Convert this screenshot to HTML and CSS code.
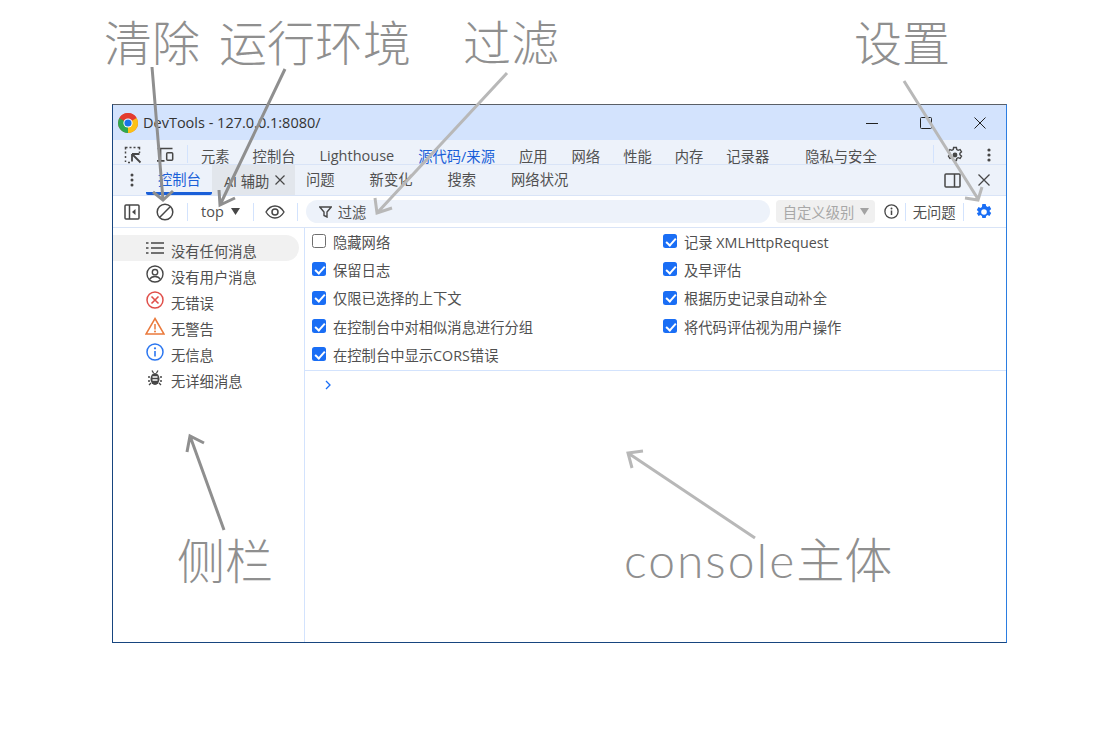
FILE: index.html
```html
<!DOCTYPE html>
<html lang="zh-CN">
<head>
<meta charset="utf-8">
<title>DevTools</title>
<link rel="stylesheet" href="styles.css">
</head>
<body>
<div class="window">
  <div class="titlebar">
    <svg class="chrome-logo" width="20" height="20" viewBox="0 0 20 20"><circle cx="10" cy="10" r="10" fill="#e33b2e"/><path d="M10 10 L18.66 5 A10 10 0 0 1 10 20 Z" fill="#fbc116"/><path d="M10 10 L10 20 A10 10 0 0 1 1.34 5 Z" fill="#2da94f"/><path d="M1.34 5 A10 10 0 0 1 18.66 5 L10 5 A5 5 0 0 0 5.67 7.5 Z" fill="#e33b2e"/><circle cx="10" cy="10" r="4.6" fill="#fff"/><circle cx="10" cy="10" r="3.6" fill="#1a73e8"/></svg>
    <span class="title-text">DevTools - 127.0.0.1:8080/</span>
    <div class="win-controls">
      <svg width="12" height="12" viewBox="0 0 12 12"><path d="M0 6.500H12" stroke="#222" fill="none"/></svg>
      <svg width="12" height="12" viewBox="0 0 12 12"><rect x=".5" y=".5" width="11" height="11" rx="1" stroke="#222" fill="none"/></svg>
      <svg width="12" height="12" viewBox="0 0 12 12"><path d="M.5 .5L11.500 11.500M11.500 .5L.5 11.500" stroke="#222" fill="none"/></svg>
    </div>
  </div>
  <div class="maintabs">
    <svg class="ico-inspect" width="18" height="18" viewBox="0 0 18 18"><path d="M1.500 16v-1.500M1.500 12v-2M1.500 7.500v-2M1.500 3.500V1.500H3.500M5.500 1.500h2M9.500 1.500h2M13.500 1.500h2v2M15.500 5.500v1.500M4 16.500h2" stroke="#474747" stroke-width="1.500" fill="none"/><path d="M8 8h7.500M8 8v7.500M8 8l8.500 8.500" stroke="#474747" stroke-width="1.800" fill="none"/></svg>
    <svg class="ico-device" width="20" height="18" viewBox="0 0 20 18"><path d="M5.500 3v11.500M2 14.800h7.500" stroke="#474747" stroke-width="1.700" fill="none"/><rect x="11.700" y="6.800" width="6" height="7.500" rx="1" stroke="#474747" stroke-width="1.500" fill="none"/><path d="M2.500 2.500h15" stroke="#474747" stroke-width="1.500"/></svg>
    <span class="vsep"></span>
    <span class="mt t1">元素</span>
    <span class="mt t2">控制台</span>
    <span class="mt t3">Lighthouse</span>
    <span class="mt t4 active">源代码/来源</span>
    <span class="mt t5">应用</span>
    <span class="mt t6">网络</span>
    <span class="mt t7">性能</span>
    <span class="mt t8">内存</span>
    <span class="mt t9">记录器</span>
    <span class="mt t10">隐私与安全</span>
    <span class="vsep end"></span>
    <svg class="ico-gear" width="18" height="18" viewBox="0 0 18 18"><path d="M7.600 1.500h2.800l.4 2.100 1.300.7 2-.8 1.400 2.400-1.600 1.400v1.400l1.600 1.400-1.400 2.400-2-.8-1.300.7-.4 2.100H7.600l-.4-2.100-1.300-.7-2 .8-1.400-2.400 1.600-1.400V7.300L2.500 5.900l1.400-2.400 2 .8 1.300-.7z" stroke="#474747" stroke-width="1.400" fill="none"/><circle cx="9" cy="9" r="2.400" fill="#474747"/></svg>
    <svg class="ico-dots" width="4" height="14" viewBox="0 0 4 14"><circle cx="2" cy="2" r="1.600" fill="#474747"/><circle cx="2" cy="7" r="1.600" fill="#474747"/><circle cx="2" cy="12" r="1.600" fill="#474747"/></svg>
  </div>
  <div class="drawertabs">
    <svg class="ico-dots2" width="4" height="14" viewBox="0 0 4 14"><circle cx="2" cy="2" r="1.500" fill="#474747"/><circle cx="2" cy="7" r="1.500" fill="#474747"/><circle cx="2" cy="12" r="1.500" fill="#474747"/></svg>
    <span class="dt dt-active">控制台</span>
    <span class="dt dt-ai">AI 辅助<svg width="10" height="10" viewBox="0 0 10 10"><path d="M.5 .5L9.500 9.500M9.500 .5L.5 9.500" stroke="#474747" stroke-width="1.200"/></svg></span>
    <span class="dt d3">问题</span>
    <span class="dt d4">新变化</span>
    <span class="dt d5">搜索</span>
    <span class="dt d6">网络状况</span>
    <svg class="ico-dock" width="17" height="15" viewBox="0 0 17 15"><rect x="1" y="1" width="15" height="13" rx="1" stroke="#474747" stroke-width="1.500" fill="none"/><path d="M10.500 1v13" stroke="#474747" stroke-width="1.500"/></svg>
    <svg class="ico-close" width="12" height="12" viewBox="0 0 12 12"><path d="M.5 .5L11.500 11.500M11.500 .5L.5 11.500" stroke="#474747" stroke-width="1.300"/></svg>
  </div>
  <div class="toolbar">
    <svg class="ico-side" width="16" height="16" viewBox="0 0 16 16"><rect x="1" y="1" width="14" height="14" rx="1" stroke="#474747" stroke-width="1.500" fill="none"/><path d="M5.500 1v14" stroke="#474747" stroke-width="1.500"/><path d="M11.500 5v6l-3.500-3z" fill="#474747"/></svg>
    <svg class="ico-clear" width="18" height="18" viewBox="0 0 18 18"><circle cx="9" cy="9" r="7.800" stroke="#474747" stroke-width="1.500" fill="none"/><path d="M3.800 14.200L14.200 3.800" stroke="#474747" stroke-width="1.500"/></svg>
    <span class="vsep s1"></span>
    <span class="ctx">top</span>
    <svg class="caret" width="9" height="7" viewBox="0 0 9 7"><path d="M0 0h9L4.500 7z" fill="#474747"/></svg>
    <span class="vsep s2"></span>
    <svg class="ico-eye" width="20" height="14" viewBox="0 0 20 14"><path d="M1 7C3.500 2.800 6.500 1 10 1s6.500 1.800 9 6c-2.500 4.200-5.500 6-9 6s-6.500-1.800-9-6z" stroke="#474747" stroke-width="1.400" fill="none"/><circle cx="10" cy="7" r="3" stroke="#474747" stroke-width="1.500" fill="none"/></svg>
    <span class="vsep s3"></span>
    <div class="filter">
      <svg width="13" height="12" viewBox="0 0 13 12"><path d="M.8 1h11.400L8 6v5L5 9.500V6z" stroke="#474747" stroke-width="1.400" fill="none"/></svg>
      <span>过滤</span>
    </div>
    <div class="level">自定义级别<svg width="9" height="7" viewBox="0 0 9 7"><path d="M0 0h9L4.500 7z" fill="#a3a3a3"/></svg></div>
    <svg class="ico-info" width="15" height="15" viewBox="0 0 15 15"><circle cx="7.500" cy="7.500" r="6.600" stroke="#474747" stroke-width="1.300" fill="none"/><path d="M7.500 6.500v4.500" stroke="#474747" stroke-width="1.500"/><circle cx="7.500" cy="4.400" r="1" fill="#474747"/></svg>
    <span class="vsep s4"></span>
    <span class="noissue">无问题</span>
    <span class="vsep s5"></span>
    <svg class="ico-gear-b" width="18" height="18" viewBox="0 0 18 18"><path d="M7.300 1h3.400l.4 2.100 1.400.8 2-.8 1.700 2.900-1.600 1.400v1.200l1.600 1.400-1.700 2.900-2-.8-1.400.8-.4 2.100H7.300l-.4-2.100-1.400-.8-2 .8-1.700-2.900L3.400 9.600V8.400L1.800 7l1.700-2.900 2 .8 1.400-.8z" fill="#1a6ef5"/><circle cx="9" cy="9" r="2.800" fill="#fff"/></svg>
  </div>
  <div class="body">
    <aside class="sidebar">
      <div class="sitem sel"><svg width="18" height="14" viewBox="0 0 18 14"><path d="M0 2h2.500M0 7h2.500M0 12h2.500M5 2h13M5 7h13M5 12h13" stroke="#474747" stroke-width="1.500"/></svg><span>没有任何消息</span></div>
      <div class="sitem"><svg width="18" height="18" viewBox="0 0 18 18"><circle cx="9" cy="9" r="8" stroke="#474747" stroke-width="1.400" fill="none"/><circle cx="9" cy="7.200" r="2.700" stroke="#474747" stroke-width="1.400" fill="none"/><path d="M3.500 14.500C5 11.900 7 11.500 9 11.500s4 .4 5.500 3" stroke="#474747" stroke-width="1.400" fill="none"/></svg><span>没有用户消息</span></div>
      <div class="sitem"><svg width="18" height="18" viewBox="0 0 18 18"><circle cx="9" cy="9" r="8" stroke="#e04f4a" stroke-width="1.500" fill="none"/><path d="M5.500 5.500l7 7M12.500 5.500l-7 7" stroke="#e04f4a" stroke-width="1.600"/></svg><span>无错误</span></div>
      <div class="sitem"><svg width="20" height="18" viewBox="0 0 20 18"><path d="M10 1.500L19 17H1z" stroke="#ea7a3c" stroke-width="1.500" fill="none"/><path d="M10 7v5.500" stroke="#ea7a3c" stroke-width="1.500"/><circle cx="10" cy="14.500" r="1" fill="#ea7a3c"/></svg><span>无警告</span></div>
      <div class="sitem"><svg width="18" height="18" viewBox="0 0 18 18"><circle cx="9" cy="9" r="8" stroke="#2b76f0" stroke-width="1.500" fill="none"/><path d="M9 8v5.500" stroke="#2b76f0" stroke-width="1.600"/><circle cx="9" cy="5.300" r="1.100" fill="#2b76f0"/></svg><span>无信息</span></div>
      <div class="sitem"><svg width="14" height="18" viewBox="0 0 14 18"><path d="M4 1.500l1.500 2.500M10 1.500L8.500 4M0 8h2M12 8h2M0 12h2M12 12h2M1 16l2-2M13 16l-2-2" stroke="#474747" stroke-width="1.300" fill="none"/><ellipse cx="7" cy="10" rx="4.500" ry="6" fill="#474747"/><path d="M4.500 8h5M4.500 11h5" stroke="#fff" stroke-width="1.300"/></svg><span>无详细消息</span></div>
    </aside>
    <main class="console">
      <div class="settings">
        <label class="chk"><i class="box off"></i>隐藏网络</label>
        <label class="chk"><i class="box"></i>记录 XMLHttpRequest</label>
        <label class="chk"><i class="box"></i>保留日志</label>
        <label class="chk"><i class="box"></i>及早评估</label>
        <label class="chk"><i class="box"></i>仅限已选择的上下文</label>
        <label class="chk"><i class="box"></i>根据历史记录自动补全</label>
        <label class="chk"><i class="box"></i>在控制台中对相似消息进行分组</label>
        <label class="chk"><i class="box"></i>将代码评估视为用户操作</label>
        <label class="chk"><i class="box"></i>在控制台中显示CORS错误</label>
      </div>
      <div class="prompt"><svg width="6" height="10" viewBox="0 0 6 10"><path d="M1 1l4 4-4 4" stroke="#1a6ef5" stroke-width="1.300" fill="none"/></svg></div>
    </main>
  </div>
</div>
<span class="note n1">清除</span>
<span class="note n2">运行环境</span>
<span class="note n3">过滤</span>
<span class="note n4">设置</span>
<span class="note n5">侧栏</span>
<span class="note n6"><b>console</b>主体</span>
<svg class="arrows" width="1119" height="747" viewBox="0 0 1119 747">
  <g fill="none" stroke="#8f8f8f" stroke-width="3">
    <path d="M152 67L163 200M153 192L163 200L173 191"/>
    <path d="M285 69L220 205M219 190L220 205L235 198"/>
    <path d="M224 530L190 436M187 452L190 436L204 443"/>
  </g>
  <g fill="none" stroke="#b8b8b8" stroke-width="3">
    <path d="M507 73L377 213M375 198L377 213L392 208"/>
    <path d="M904 81L978 199M965 198L978 200L982 187"/>
    <path d="M755 538L628 453M643 451L628 453L632 468"/>
  </g>
</svg>
</body>
</html>
```
FILE: styles.css
```css
* { box-sizing: border-box; }
html, body { margin: 0; padding: 0; }
body {
  width: 1119px;
  height: 747px;
  background: #fff;
  overflow: hidden;
  position: relative;
  font-family: "Noto Sans CJK SC", "Noto Sans", sans-serif;
}
.window {
  position: absolute;
  left: 112px;
  top: 104px;
  width: 895px;
  height: 539px;
  border: 1px solid #17457f;
  border-top-color: #5a5f66;
  border-right-color: #2b7de1;
  display: flex;
  flex-direction: column;
  font-family: "Open Sans", "Noto Sans CJK SC", sans-serif;
  font-size: 14.300px;
  color: #505050;
}
.titlebar {
  height: 35px;
  background: #d3e3fd;
  display: flex;
  align-items: center;
  padding-left: 5px;
  flex: none;
}
.title-text {
  margin-left: 5px;
  font-size: 14.500px;
  color: #333;
}
.win-controls {
  margin-left: auto;
  display: flex;
  gap: 42px;
  padding-right: 20px;
}
.maintabs, .drawertabs {
  background: #edf2fa;
  display: flex;
  align-items: center;
  flex: none;
  border-bottom: 1px solid #d9e4f7;
}
.maintabs { height: 25px; padding: 6px 0 0 11px; }
.drawertabs { height: 31px; padding-left: 17px; }
.ico-device { margin-left: 13px; }
.vsep { width: 1px; height: 18px; background: #d3e3fd; flex: none; }
.maintabs .vsep { margin-left: 12px; margin-top: -3px; }
.mt { flex: none; white-space: nowrap; }
.mt.active { color: #1a5fd8; }
.t1 { margin-left: 13px; }
.t2 { margin-left: 23px; }
.t3 { margin-left: 24px; font-size: 14.500px; }
.t4 { margin-left: 24px; }
.t5 { margin-left: 24px; }
.t6 { margin-left: 24px; }
.t7 { margin-left: 23px; }
.t8 { margin-left: 23px; }
.t9 { margin-left: 23px; }
.t10 { margin-left: 36px; }
.maintabs .vsep.end { margin-left: 56px; }
.ico-gear { margin-left: 12px; }
.ico-dots { margin-left: 23px; }
.dt { flex: none; white-space: nowrap; height: 30px; line-height: 29px; }
.dt-active { color: #1a5fd8; width: 66px; padding-left: 12px; margin-left: 12px; border-bottom: 3px solid #1a5fd8; border-radius: 0 0 2px 2px; }
.dt-ai { background: #e2e6ec; padding: 0 8px 0 12px; width: 83px; display: flex; gap: 6px; align-items: center; line-height: normal; }
.d3 { margin-left: 11px; }
.d4 { margin-left: 35px; }
.d5 { margin-left: 35px; }
.d6 { margin-left: 35px; }
.ico-dock { margin-left: auto; }
.ico-close { margin: 0 16px 0 17px; }
.toolbar {
  height: 32px;
  flex: none;
  background: #fff;
  border-bottom: 1px solid #d9e4f7;
  display: flex;
  align-items: center;
  padding-left: 11px;
}
.ico-clear { margin-left: 16px; }
.s1 { margin-left: 13px; }
.ctx { margin-left: 13px; font-size: 14.500px; }
.caret { margin-left: 7px; }
.s2 { margin-left: 13px; }
.ico-eye { margin-left: 11px; }
.s3 { margin-left: 12px; }
.filter {
  margin-left: 8px;
  width: 464px;
  height: 23px;
  border-radius: 12px;
  background: #edf2fa;
  display: flex;
  align-items: center;
  gap: 6px;
  padding-left: 13px;
}
.level {
  margin-left: 6px;
  width: 99px;
  height: 23px;
  border-radius: 4px;
  background: #f0f0f0;
  color: #a8a8a8;
  display: flex;
  align-items: center;
  justify-content: space-between;
  padding: 0 6px 0 7px;
}
.ico-info { margin-left: 9px; }
.s4 { margin-left: 6px; }
.noissue { margin-left: 7px; }
.s5 { margin-left: 7px; }
.ico-gear-b { margin-left: 11px; }
.body { flex: 1; display: flex; min-height: 0; background: #fff; }
.sidebar {
  width: 192px;
  flex: none;
  border-right: 1px solid #d3e3fd;
  padding-top: 7px;
  display: flex;
  flex-direction: column;
}
.sitem {
  height: 26px;
  display: grid;
  grid-template-columns: 20px 1fr;
  column-gap: 6px;
  padding-left: 32px;
  align-items: center;
  margin-right: 5px;
}
.sitem span { position: relative; top: 2px; }
.sitem svg { justify-self: center; }
.sitem.sel { background: #f1f1f1; border-radius: 0 13px 13px 0; }
.console { flex: 1; min-width: 0; }
.settings {
  display: grid;
  grid-template-columns: 351px 1fr;
  grid-auto-rows: 28.300px;
  padding: 0 0 0 7px;
  height: 143px;
  border-bottom: 1px solid #d3e3fd;
}
.chk { display: flex; align-items: center; gap: 7px; white-space: nowrap; padding-bottom: 2px; }
.box {
  width: 14px;
  height: 14px;
  border-radius: 2.500px;
  background: #1a6ef5;
  position: relative;
  flex: none;
}
.box::after {
  content: "";
  position: absolute;
  left: 4.500px;
  top: 1.500px;
  width: 4px;
  height: 8px;
  border: solid #fff;
  border-width: 0 2px 2px 0;
  transform: rotate(42deg);
}
.box.off { background: #fff; border: 1.500px solid #6f6f6f; }
.box.off::after { display: none; }
.prompt { padding: 9px 0 0 20px; line-height: 0; }
.note {
  position: absolute;
  font-family: "Noto Sans CJK SC", sans-serif;
  font-weight: 300;
  font-size: 48px;
  line-height: 48px;
  color: #8f8f8f;
  white-space: nowrap;
}
.note b { font-family: "Lato", sans-serif; font-weight: 300; letter-spacing: 2px; }
.n1 { left: 104px; top: 16px; }
.n2 { left: 219px; top: 16px; }
.n3 { left: 463px; top: 16px; }
.n4 { left: 854px; top: 16px; }
.n5 { left: 177px; top: 534px; }
.n6 { left: 624px; top: 533px; }
.arrows { position: absolute; left: 0; top: 0; pointer-events: none; }
```
